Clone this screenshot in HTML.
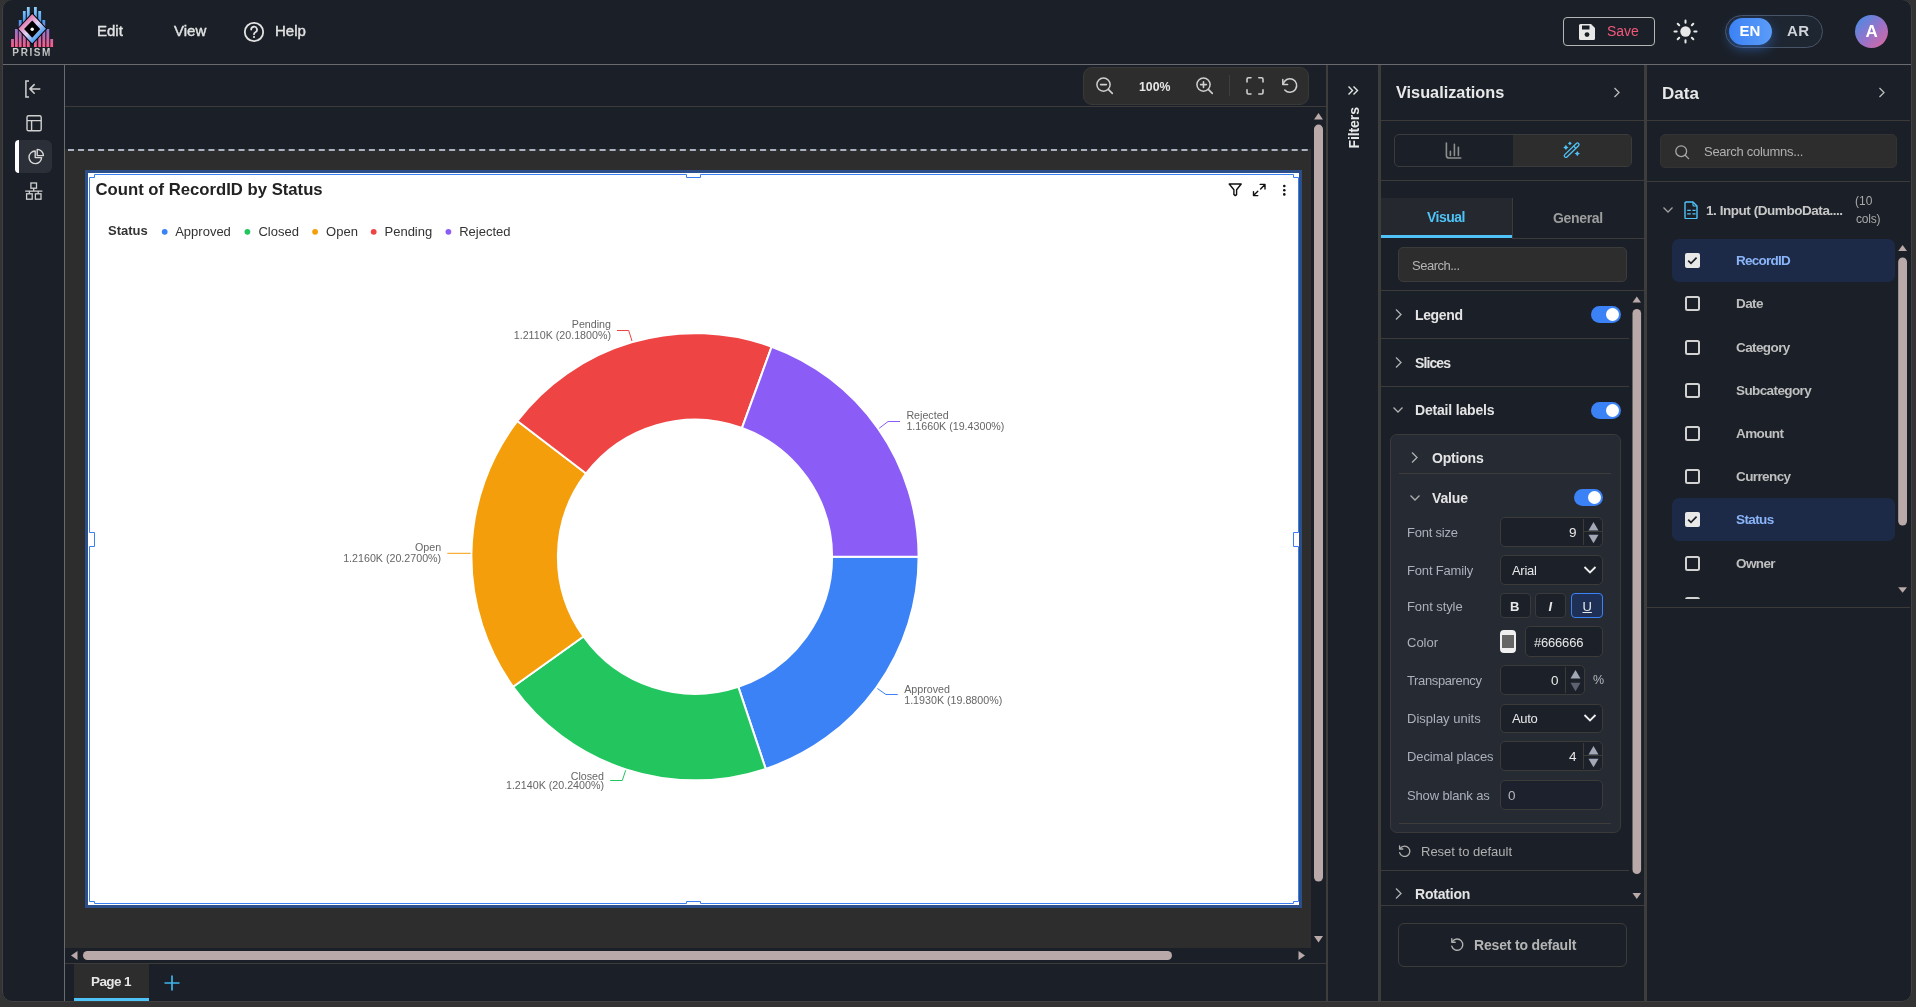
<!DOCTYPE html>
<html><head><meta charset="utf-8">
<style>
*{box-sizing:border-box;margin:0;padding:0}
html,body{width:1916px;height:1007px;overflow:hidden;background:#333333;font-family:"Liberation Sans",sans-serif}
.a{position:absolute}
.nav{background:#1b2028}
.hl{position:absolute;height:1px;background:#3c3b3a}
.vl{position:absolute;width:1px;background:#3c3b3a}
.frame{position:absolute;left:2px;top:-1px;width:1910px;height:1003px;border-radius:10px;box-shadow:0 0 0 40px #333333;border:1px solid #404040;z-index:100;pointer-events:none}
.t{position:absolute;white-space:nowrap;line-height:1}
</style></head>
<body>
<div style="position:absolute;left:0;top:0;width:1916px;height:1007px;will-change:transform;overflow:hidden">
<!-- base app background -->
<div class="a nav" style="left:0;top:0;width:1916px;height:1007px"></div>

<!-- HEADER -->
<div class="hl" style="left:0;top:64px;width:1916px;background:#686a6f"></div>
<!-- logo -->
<svg class="a" style="left:8px;top:4px" width="50" height="56" viewBox="8 4 50 56">
  <defs>
    <linearGradient id="barg" x1="0" y1="7" x2="0" y2="47" gradientUnits="userSpaceOnUse">
      <stop offset="0" stop-color="#8fd0ff"/><stop offset="0.35" stop-color="#4a9cf0"/><stop offset="0.6" stop-color="#a070c8"/><stop offset="1" stop-color="#ff5a86"/>
    </linearGradient>
    <linearGradient id="dg" x1="23" y1="19" x2="41" y2="38" gradientUnits="userSpaceOnUse">
      <stop offset="0" stop-color="#e0609a"/><stop offset="0.5" stop-color="#e4d4f6"/><stop offset="1" stop-color="#2a94f0"/>
    </linearGradient>
    <linearGradient id="pg" x1="0" y1="48" x2="0" y2="56" gradientUnits="userSpaceOnUse">
      <stop offset="0" stop-color="#d8d8d8"/><stop offset="1" stop-color="#aaaaaa"/>
    </linearGradient>
  </defs>
  <g fill="url(#barg)">
    <rect x="11.1" y="39" width="2.8" height="8"/>
    <rect x="15" y="29" width="2.8" height="18"/>
    <rect x="18.8" y="20" width="2.8" height="27"/>
    <rect x="22.9" y="11" width="2.8" height="36"/>
    <rect x="26.9" y="7" width="2.8" height="40"/>
    <rect x="34" y="7" width="2.8" height="40"/>
    <rect x="38.3" y="11" width="2.8" height="36"/>
    <rect x="42.4" y="20" width="2.8" height="27"/>
    <rect x="46.4" y="29" width="2.8" height="18"/>
    <rect x="50.3" y="39" width="2.8" height="8"/>
  </g>
  <polygon points="32.2,12.5 47.2,28.8 32.2,45 17.2,28.8" fill="#000"/>
  <polygon points="32.2,14 46,28.8 32.2,43.6 18.4,28.8" fill="url(#dg)"/>
  <polygon points="32.2,20.4 40.2,29 32.2,37.8 24.1,29" fill="#000"/>
  <circle cx="32.2" cy="29.2" r="1.7" fill="#fff"/>
  <text x="32.2" y="56" text-anchor="middle" font-family="Liberation Sans" font-weight="bold" font-size="10" letter-spacing="1.6" fill="url(#pg)">PRISM</text>
</svg>
<div class="t" style="left:97px;top:23px;font-size:15px;color:#e2e2e2;-webkit-text-stroke:0.4px #e2e2e2">Edit</div>
<div class="t" style="left:174px;top:23px;font-size:15px;color:#e2e2e2;-webkit-text-stroke:0.4px #e2e2e2">View</div>
<svg class="a" style="left:243px;top:21px" width="22" height="22" viewBox="0 0 22 22"><circle cx="11" cy="11" r="9.2" fill="none" stroke="#e2e2e2" stroke-width="1.8"/><path d="M8.2 8.6a2.9 2.9 0 1 1 4.2 2.6c-.9.5-1.4 1-1.4 2.1" fill="none" stroke="#e2e2e2" stroke-width="1.8" stroke-linecap="round"/><circle cx="11" cy="16" r="1.1" fill="#e2e2e2"/></svg>
<div class="t" style="left:275px;top:23px;font-size:15px;color:#e2e2e2;-webkit-text-stroke:0.4px #e2e2e2">Help</div>

<!-- header right -->
<div class="a" style="left:1563px;top:17px;width:92px;height:29px;border:1px solid #b5b5b5;border-radius:4px"></div>
<svg class="a" style="left:1578px;top:23px" width="18" height="17" viewBox="0 0 18 17"><path d="M1 2.5A1.5 1.5 0 0 1 2.5 1H13l4 4v10.5A1.5 1.5 0 0 1 15.5 17h-13A1.5 1.5 0 0 1 1 15.5z" fill="#e8e8e8"/><rect x="4" y="2.5" width="7.5" height="4" fill="#1b2028"/><circle cx="9" cy="11.6" r="2.4" fill="#1b2028"/></svg>
<div class="t" style="left:1607px;top:24px;font-size:14px;color:#f0587a;letter-spacing:0px">Save</div>
<svg class="a" style="left:1673px;top:19px" width="25" height="25" viewBox="0 0 25 25"><circle cx="12.5" cy="12.5" r="5.2" fill="#e8e8e8"/><g stroke="#e8e8e8" stroke-width="2" stroke-linecap="round"><path d="M12.5 1.5v2.2M12.5 21.3v2.2M1.5 12.5h2.2M21.3 12.5h2.2M4.7 4.7l1.5 1.5M18.8 18.8l1.5 1.5M4.7 20.3l1.5-1.5M18.8 6.2l1.5-1.5"/></g></svg>
<div class="a" style="left:1725px;top:15px;width:98px;height:33px;border:1px solid #485468;border-radius:17px;background:#1e2632"></div>
<div class="a" style="left:1729px;top:18px;width:43px;height:27px;border-radius:14px;background:linear-gradient(90deg,#3b82f6,#5b9cf8);box-shadow:0 4px 12px rgba(59,130,246,0.45)"></div>
<div class="t" style="left:1739.5px;top:23px;font-size:15px;font-weight:bold;color:#fff">EN</div>
<div class="t" style="left:1787px;top:23px;font-size:15px;font-weight:bold;color:#d0d3d8;letter-spacing:0.3px">AR</div>
<div class="a" style="left:1855px;top:15px;width:33px;height:33px;border-radius:50%;background:linear-gradient(135deg,#3d8ee8,#9b72c8 55%,#e0679a)"></div>
<div class="t" style="left:1865.5px;top:23px;font-size:17px;font-weight:bold;color:#fff">A</div>

<!-- SIDEBAR -->
<div class="vl" style="left:64px;top:65px;height:940px;background:#686b70"></div>
<svg class="a" style="left:22px;top:78px" width="22" height="22" viewBox="0 0 22 22"><path d="M7 3H3.9v16H7" fill="none" stroke="#d0d0d0" stroke-width="1.5"/><path d="M17.8 10.9H8.4M12.2 6.6L7.9 10.9l4.3 4.3" fill="none" stroke="#d0d0d0" stroke-width="1.5" stroke-linecap="round" stroke-linejoin="round"/></svg>
<svg class="a" style="left:24px;top:113px" width="20" height="20" viewBox="0 0 20 20"><rect x="3" y="2.8" width="14.2" height="15" rx="1.6" fill="none" stroke="#d0d0d0" stroke-width="1.4"/><path d="M3 7.6h14.2M7.6 7.6v10.2" stroke="#d0d0d0" stroke-width="1.4"/></svg>
<div class="a" style="left:15px;top:140px;width:37px;height:33px;border-radius:6px;background:#2b2f38"></div>
<div class="a" style="left:15px;top:140px;width:4px;height:33px;border-radius:4px 0 0 4px;background:#ffffff"></div>
<svg class="a" style="left:26px;top:147px" width="20" height="20" viewBox="0 0 20 20"><path d="M9.2 4A6.3 6.3 0 1 0 15.6 10.6H9.2z" fill="none" stroke="#d8d8d8" stroke-width="1.4" stroke-linejoin="round"/><path d="M11.2 2.4v6.2h6.2a6.2 6.2 0 0 0-6.2-6.2z" fill="none" stroke="#d8d8d8" stroke-width="1.4" stroke-linejoin="round"/></svg>
<svg class="a" style="left:23px;top:180px" width="22" height="22" viewBox="0 0 22 22"><g fill="none" stroke="#d0d0d0" stroke-width="1.3"><rect x="7.9" y="3" width="5.6" height="5.2"/><rect x="3.6" y="13.8" width="5.6" height="5.4"/><rect x="12.4" y="13.8" width="5.6" height="5.4"/><path d="M10.7 8.2v3M2.2 11.2h17.2M6.4 11.2v2.6M15.2 11.2v2.6"/></g></svg>

<!-- CANVAS AREA -->
<div class="hl" style="left:65px;top:106px;width:1262px;background:#3d3b39"></div>
<!-- toolbar pill -->
<div class="a" style="left:1083px;top:67px;width:226px;height:38px;border-radius:9px;background:#2d2d2d;border:1px solid #393939"></div>
<svg class="a" style="left:1094px;top:75px" width="20" height="20" viewBox="0 0 20 20"><circle cx="9.5" cy="9.6" r="6.6" fill="none" stroke="#cfcfcf" stroke-width="1.5"/><path d="M6.6 9.6h5.8M14.3 14.4l4 4" stroke="#cfcfcf" stroke-width="1.6" stroke-linecap="round"/></svg>
<div class="t" style="left:1139px;top:81px;font-size:12.3px;font-weight:bold;color:#e6e6e6">100%</div>
<svg class="a" style="left:1194px;top:75px" width="20" height="20" viewBox="0 0 20 20"><circle cx="9.5" cy="9.6" r="6.6" fill="none" stroke="#cfcfcf" stroke-width="1.5"/><path d="M6.6 9.6h5.8M9.5 6.7v5.8M14.3 14.4l4 4" stroke="#cfcfcf" stroke-width="1.6" stroke-linecap="round"/></svg>
<div class="vl" style="left:1229px;top:75px;height:21px;background:#3f3f3f"></div>
<svg class="a" style="left:1245px;top:76px" width="20" height="20" viewBox="0 0 20 20"><path d="M2 6V3.2Q2 1.8 3.4 1.8H6M13.8 1.8h2.8q1.4 0 1.4 1.4V6M18 13.8v2.8q0 1.4-1.4 1.4h-2.8M6 18H3.4Q2 18 2 16.6v-2.8" fill="none" stroke="#cfcfcf" stroke-width="1.6" stroke-linecap="round"/></svg>
<svg class="a" style="left:1280px;top:76px" width="20" height="20" viewBox="0 0 20 20"><path d="M3.2 8.2A6.8 6.8 0 1 1 4.8 14" fill="none" stroke="#cfcfcf" stroke-width="1.5" stroke-linecap="round"/><path d="M2.8 3.6v4.8h4.8" fill="none" stroke="#cfcfcf" stroke-width="1.5" stroke-linecap="round" stroke-linejoin="round"/></svg>

<!-- gray page -->
<div class="a" style="left:65px;top:149px;width:1246px;height:799px;background:#2d2d2d"></div>
<svg class="a" style="left:68px;top:149px" width="1240" height="2" viewBox="0 0 1240 2"><line x1="0" y1="1" x2="1240" y2="1" stroke="#aab2c1" stroke-width="2" stroke-dasharray="6.03 4"/></svg>

<!-- vertical scrollbar -->
<svg class="a" style="left:1311px;top:107px" width="15" height="841" viewBox="0 0 15 841">
  <path d="M3 12.5L7.5 6 12 12.5z" fill="#b9a9a9"/>
  <rect x="3" y="17.6" width="9" height="757" rx="4.5" fill="#b9a9a9"/>
  <path d="M3 829L7.5 835.5 12 829z" fill="#b9a9a9"/>
</svg>
<!-- horizontal scrollbar -->
<svg class="a" style="left:65px;top:948px" width="1246" height="15" viewBox="0 0 1246 15">
  <path d="M12.5 3L6 7.5 12.5 12z" fill="#b9a9a9"/>
  <rect x="18" y="3" width="1089" height="9" rx="4.5" fill="#b9a9a9"/>
  <path d="M1233.5 3L1240 7.5 1233.5 12z" fill="#b9a9a9"/>
</svg>
<div class="hl" style="left:65px;top:963px;width:1262px;background:#3d3b39"></div>
<!-- page tabs -->
<div class="a" style="left:74px;top:964px;width:75px;height:37px;background:#2d2d2d"></div>
<div class="a" style="left:74px;top:998px;width:75px;height:3px;background:#4fc3f7"></div>
<div class="t" style="left:91px;top:975px;font-size:13.5px;font-weight:bold;color:#e6e6e6;letter-spacing:-0.6px">Page 1</div>
<svg class="a" style="left:163px;top:974px" width="18" height="18" viewBox="0 0 18 18"><path d="M9 1.5v15M1.5 9h15" stroke="#3fb6ea" stroke-width="1.7"/></svg>

<!-- canvas right border and filters strip -->
<div class="a" style="left:1326px;top:65px;width:2px;height:940px;background:#3d3d3c"></div>
<div class="a" style="left:1378px;top:65px;width:3px;height:940px;background:#3d3d3c"></div>
<svg class="a" style="left:1346px;top:84px" width="14" height="13" viewBox="0 0 14 13"><path d="M2.5 2.5L6.5 6.5 2.5 10.5M7.5 2.5L11.5 6.5 7.5 10.5" fill="none" stroke="#e6e6e6" stroke-width="1.4"/></svg>
<div class="t" style="left:1333px;top:121px;width:41px;font-size:14px;font-weight:bold;color:#e8e8e8;transform:rotate(-90deg);transform-origin:center;text-align:center;letter-spacing:-0.1px">Filters</div>

<!-- CHART BOX -->
<div class="a" style="left:85px;top:170px;width:1217px;height:738px;border:3px solid #2c4f8a;background:#fff"></div>
<svg class="a" style="left:0;top:0" width="1916" height="1007" viewBox="0 0 1916 1007">
  <path d="M94.5 174.5H686.5V177.5H700.5V174.5H1293.5V177.5H1298.5V532.5H1293.5V546.5H1298.5V901.5H1293.5V903.5H700.5V901.5H686.5V903.5H94.5V901.5H89.5V546.5H94.5V532.5H89.5V177.5H94.5Z" fill="none" stroke="#3a80f2" stroke-width="1"/>
<path d="M918.60 556.75A223.6 223.6 0 0 1 765.70 768.88L738.35 686.82A137.1 137.1 0 0 0 832.10 556.75Z" fill="#3b82f6" stroke="#fff" stroke-width="2" stroke-linejoin="round"/>
<path d="M765.70 768.88A223.6 223.6 0 0 1 513.12 686.81L583.48 636.50A137.1 137.1 0 0 0 738.35 686.82Z" fill="#22c55e" stroke="#fff" stroke-width="2" stroke-linejoin="round"/>
<path d="M513.12 686.81A223.6 223.6 0 0 1 517.38 420.93L586.09 473.47A137.1 137.1 0 0 0 583.48 636.50Z" fill="#f59e0b" stroke="#fff" stroke-width="2" stroke-linejoin="round"/>
<path d="M517.38 420.93A223.6 223.6 0 0 1 771.67 346.70L742.01 427.96A137.1 137.1 0 0 0 586.09 473.47Z" fill="#ef4444" stroke="#fff" stroke-width="2" stroke-linejoin="round"/>
<path d="M771.67 346.70A223.6 223.6 0 0 1 918.60 556.75L832.10 556.75A137.1 137.1 0 0 0 742.01 427.96Z" fill="#8b5cf6" stroke="#fff" stroke-width="2" stroke-linejoin="round"/>

  <g fill="none" stroke-width="1">
    <path d="M617 330.5H628.7L632 341" stroke="#ef4444"/>
    <path d="M879.2 428.3L888.1 421.5H900" stroke="#8b5cf6"/>
    <path d="M447.3 553.3H470.7" stroke="#f59e0b"/>
    <path d="M877.4 688.5L885.9 694.5H897.7" stroke="#3b82f6"/>
    <path d="M610.2 780.5H622.3L625.7 770.2" stroke="#22c55e"/>
  </g>
  <g font-family="Liberation Sans" font-size="10.7" fill="#666666">
    <text x="611" y="328" text-anchor="end">Pending</text>
    <text x="611" y="339.2" text-anchor="end">1.2110K (20.1800%)</text>
    <text x="906.4" y="419.1">Rejected</text>
    <text x="906.4" y="430.2">1.1660K (19.4300%)</text>
    <text x="441.2" y="550.9" text-anchor="end">Open</text>
    <text x="441.2" y="562.2" text-anchor="end">1.2160K (20.2700%)</text>
    <text x="904.2" y="693">Approved</text>
    <text x="904.2" y="704.3">1.1930K (19.8800%)</text>
    <text x="604" y="779.5" text-anchor="end">Closed</text>
    <text x="604" y="789.4" text-anchor="end">1.2140K (20.2400%)</text>
  </g>
  <text x="95.5" y="195" font-family="Liberation Sans" font-weight="bold" font-size="16.7" fill="#222">Count of RecordID by Status</text>
  <g font-family="Liberation Sans" font-size="13" fill="#333">
    <text x="108" y="235" font-weight="bold">Status</text>
    <circle cx="164.7" cy="231.8" r="2.9" fill="#3b82f6"/><text x="175.2" y="235.5">Approved</text>
    <circle cx="247.4" cy="231.8" r="2.9" fill="#22c55e"/><text x="258.4" y="235.5">Closed</text>
    <circle cx="315.1" cy="231.8" r="2.9" fill="#f59e0b"/><text x="326.1" y="235.5">Open</text>
    <circle cx="373.7" cy="231.8" r="2.9" fill="#ef4444"/><text x="384.5" y="235.5">Pending</text>
    <circle cx="448.4" cy="231.8" r="2.9" fill="#8b5cf6"/><text x="459.2" y="235.5">Rejected</text>
  </g>
  <!-- chart icons -->
  <g fill="none" stroke="#111" stroke-width="1.4" stroke-linejoin="round" stroke-linecap="round">
    <path d="M1229.2 184H1241.2L1236.6 189.8V194.6L1235.3 195.6L1233.9 194.4V189.8Z"/>
    <path d="M1260.2 184.4H1265V189M1265 184.4L1260.6 189M1253.5 191.6V195.6H1257.8M1253.5 195.6L1257.8 191.2"/>
  </g>
  <g fill="#111"><circle cx="1284.3" cy="186" r="1.3"/><circle cx="1284.3" cy="190.2" r="1.3"/><circle cx="1284.3" cy="194.4" r="1.3"/></g>
</svg>


<!-- VISUALIZATIONS PANEL -->
<div class="t" style="left:1396px;top:84px;font-size:16.3px;font-weight:bold;color:#e8e8e8">Visualizations</div>
<svg class="a" style="left:1610px;top:85px" width="14" height="14" viewBox="0 0 14 14"><path d="M4.5 3L9 7.5 4.5 12" fill="none" stroke="#bdbdbd" stroke-width="1.3"/></svg>
<div class="hl" style="left:1381px;top:120px;width:263px"></div>
<div class="a" style="left:1394px;top:134px;width:238px;height:33px;border:1px solid #3b3b3b;border-radius:5px;overflow:hidden">
  <div class="a" style="left:118px;top:0;width:120px;height:33px;background:#2d2d2d"></div>
</div>
<svg class="a" style="left:1443px;top:140px" width="20" height="20" viewBox="0 0 20 20"><path d="M3.4 3V15.4Q3.4 18 6 18H17.8" fill="none" stroke="#8e8e8e" stroke-width="1.6" stroke-linecap="round"/><path d="M7.4 11.4v4M11.4 4.4v11M15.4 7.4v8" stroke="#8e8e8e" stroke-width="1.6" stroke-linecap="round"/></svg>
<svg class="a" style="left:1561px;top:140px" width="20" height="20" viewBox="0 0 20 20"><g transform="rotate(-44 10.65 10.2)"><rect x="1" y="8.6" width="19.3" height="3.2" rx="1.6" fill="none" stroke="#4fc3f7" stroke-width="1.3"/><path d="M15 8.6v3.2" stroke="#4fc3f7" stroke-width="1.3"/></g><path d="M4.9 4.7Q5.66 6.64 7.6000000000000005 7.4Q5.66 8.16 4.9 10.100000000000001Q4.14 8.16 2.2 7.4Q4.14 6.64 4.9 4.7Z M16.3 10.899999999999999Q17.06 12.84 19.0 13.6Q17.06 14.36 16.3 16.3Q15.54 14.36 13.600000000000001 13.6Q15.54 12.84 16.3 10.899999999999999Z M8.9 1.5Q9.66 2.64 10.8 3.4Q9.66 4.16 8.9 5.3Q8.14 4.16 7.0 3.4Q8.14 2.64 8.9 1.5Z" fill="#4fc3f7"/></svg>
<div class="hl" style="left:1381px;top:180px;width:263px"></div>
<div class="a" style="left:1381px;top:198px;width:131px;height:38px;background:#25282e"></div>
<div class="a" style="left:1381px;top:235px;width:131px;height:3px;background:#4fc3f7"></div>
<div class="vl" style="left:1512px;top:198px;height:40px;background:#3a3b3d"></div>
<div class="hl" style="left:1512px;top:238px;width:132px"></div>
<div class="t" style="left:1427px;top:210px;font-size:14px;font-weight:bold;color:#4fc3f7;letter-spacing:-0.5px">Visual</div>
<div class="t" style="left:1553px;top:211px;font-size:14px;font-weight:bold;color:#9e9e9e;letter-spacing:-0.32px">General</div>
<div class="a" style="left:1398px;top:247px;width:229px;height:35px;border:1px solid #3b3b3b;border-radius:5px;background:#2d2d2d"></div>
<div class="t" style="left:1412px;top:259px;font-size:13px;color:#b4b4b4;letter-spacing:-0.5px">Search...</div>
<div class="hl" style="left:1381px;top:290px;width:263px"></div>

<!-- scroll viewport content -->
<svg class="a" style="left:1394px;top:308px" width="10" height="14" viewBox="0 0 10 14"><path d="M2 1.5L7 6.5 2 11.5" fill="none" stroke="#b0b0b0" stroke-width="1.3"/></svg>
<div class="t" style="left:1415px;top:308px;font-size:14px;font-weight:bold;color:#e4e4e4;letter-spacing:-0.36px">Legend</div>
<div class="a" style="left:1591px;top:306px;width:30px;height:17px;border-radius:9px;background:#3b82f6"></div>
<div class="a" style="left:1606px;top:308px;width:13px;height:13px;border-radius:50%;background:#fff"></div>
<div class="hl" style="left:1381px;top:338px;width:248px"></div>
<svg class="a" style="left:1394px;top:356px" width="10" height="14" viewBox="0 0 10 14"><path d="M2 1.5L7 6.5 2 11.5" fill="none" stroke="#b0b0b0" stroke-width="1.3"/></svg>
<div class="t" style="left:1415px;top:356px;font-size:14px;font-weight:bold;color:#e4e4e4;letter-spacing:-0.9px">Slices</div>
<div class="hl" style="left:1381px;top:386px;width:248px"></div>
<svg class="a" style="left:1392px;top:404px" width="12" height="12" viewBox="0 0 12 12"><path d="M1.5 3.5L6 8 10.5 3.5" fill="none" stroke="#b0b0b0" stroke-width="1.3"/></svg>
<div class="t" style="left:1415px;top:403px;font-size:14px;font-weight:bold;color:#e4e4e4;letter-spacing:-0.18px">Detail labels</div>
<div class="a" style="left:1591px;top:402px;width:30px;height:17px;border-radius:9px;background:#3b82f6"></div>
<div class="a" style="left:1606px;top:404px;width:13px;height:13px;border-radius:50%;background:#fff"></div>

<!-- card -->
<div class="a" style="left:1390px;top:434px;width:231px;height:399px;border:1px solid #3a3a3a;border-radius:7px;background:#252a33"></div>
<svg class="a" style="left:1410px;top:451px" width="10" height="14" viewBox="0 0 10 14"><path d="M2 1.5L7 6.5 2 11.5" fill="none" stroke="#b0b0b0" stroke-width="1.3"/></svg>
<div class="t" style="left:1432px;top:451px;font-size:14px;font-weight:bold;color:#e4e4e4;letter-spacing:-0.2px">Options</div>
<div class="hl" style="left:1399px;top:473px;width:212px;background:#3d3c3a"></div>
<svg class="a" style="left:1409px;top:492px" width="12" height="12" viewBox="0 0 12 12"><path d="M1.5 3.5L6 8 10.5 3.5" fill="none" stroke="#b0b0b0" stroke-width="1.3"/></svg>
<div class="t" style="left:1432px;top:491px;font-size:14px;font-weight:bold;color:#e4e4e4;letter-spacing:-0.16px">Value</div>
<div class="a" style="left:1574px;top:489px;width:29px;height:17px;border-radius:9px;background:#3b82f6"></div>
<div class="a" style="left:1588px;top:491px;width:13px;height:13px;border-radius:50%;background:#fff"></div>

<div class="t" style="left:1407px;top:526px;font-size:13px;color:#abb1bb;letter-spacing:-0.21px">Font size</div>
<div class="a" style="left:1500px;top:517px;width:103px;height:30px;border:1px solid #3d3b38;border-radius:5px;background:#1b2029"></div>
<div class="vl" style="left:1583px;top:519px;height:26px;background:#3d3b38"></div>
<div class="hl" style="left:1583px;top:531px;width:19px;background:#3d3b38"></div>
<svg class="a" style="left:1586px;top:520px" width="14" height="24" viewBox="0 0 14 24"><path d="M2.5 10.4L7.5 2 12.5 10.4z" fill="#a2a8b6"/><path d="M2.5 14.8L7.5 23.2 12.5 14.8z" fill="#a2a8b6"/></svg>
<div class="t" style="left:1569px;top:526px;font-size:13.5px;color:#e8e8e8">9</div>

<div class="t" style="left:1407px;top:564px;font-size:13px;color:#abb1bb;letter-spacing:-0.17px">Font Family</div>
<div class="a" style="left:1500px;top:555px;width:103px;height:30px;border:1px solid #3d3b38;border-radius:5px;background:#1b2029"></div>
<div class="t" style="left:1512px;top:564px;font-size:13px;color:#e8e8e8;letter-spacing:-0.3px">Arial</div>
<svg class="a" style="left:1583px;top:564px" width="14" height="12" viewBox="0 0 14 12"><path d="M1.5 3L7 8.5 12.5 3" fill="none" stroke="#f0f0f0" stroke-width="1.8"/></svg>

<div class="t" style="left:1407px;top:600px;font-size:13px;color:#abb1bb;letter-spacing:-0.08px">Font style</div>
<div class="a" style="left:1500px;top:593px;width:31px;height:25px;border:1px solid #3a3a3a;border-radius:4px;background:#1b2029"></div>
<div class="t" style="left:1510px;top:599.5px;font-size:13px;font-weight:bold;color:#e8e8e8">B</div>
<div class="a" style="left:1535px;top:593px;width:31px;height:25px;border:1px solid #3a3a3a;border-radius:4px;background:#1b2029"></div>
<div class="t" style="left:1548.5px;top:599.5px;font-size:13px;font-style:italic;font-weight:bold;color:#e8e8e8">I</div>
<div class="a" style="left:1571px;top:593px;width:32px;height:25px;border:1px solid #3b82f6;border-radius:4px;background:#1f3057"></div>
<div class="t" style="left:1582.5px;top:599.5px;font-size:13px;color:#e8e8e8;text-decoration:underline">U</div>

<div class="t" style="left:1407px;top:636px;font-size:13px;color:#abb1bb;letter-spacing:0px">Color</div>
<div class="a" style="left:1500px;top:630px;width:16px;height:23px;border-style:solid;border-color:#f0f0f0;border-width:5px 2px;border-radius:4px;background:#666666"></div>
<div class="a" style="left:1525px;top:626px;width:78px;height:31px;border:1px solid #3d3b38;border-radius:5px;background:#1b2029"></div>
<div class="t" style="left:1534px;top:636px;font-size:13px;color:#e8e8e8;letter-spacing:-0.2px">#666666</div>

<div class="t" style="left:1407px;top:674px;font-size:13px;color:#abb1bb;letter-spacing:-0.37px">Transparency</div>
<div class="a" style="left:1500px;top:665px;width:85px;height:30px;border:1px solid #3d3b38;border-radius:5px;background:#1b2029"></div>
<div class="vl" style="left:1565px;top:667px;height:26px;background:#3d3b38"></div>
<svg class="a" style="left:1568px;top:668px" width="14" height="24" viewBox="0 0 14 24"><path d="M2.5 10.4L7.5 2 12.5 10.4z" fill="#a2a8b6"/><path d="M2.5 14.8L7.5 23.2 12.5 14.8z" fill="#5c6270"/></svg>
<div class="t" style="left:1551px;top:674px;font-size:13.5px;color:#e8e8e8">0</div>
<div class="t" style="left:1593px;top:674px;font-size:12.5px;color:#b6bac2">%</div>

<div class="t" style="left:1407px;top:712px;font-size:13px;color:#abb1bb;letter-spacing:0px">Display units</div>
<div class="a" style="left:1500px;top:704px;width:103px;height:29px;border:1px solid #3d3b38;border-radius:5px;background:#1b2029"></div>
<div class="t" style="left:1512px;top:712px;font-size:13px;color:#e8e8e8;letter-spacing:-0.3px">Auto</div>
<svg class="a" style="left:1583px;top:712px" width="14" height="12" viewBox="0 0 14 12"><path d="M1.5 3L7 8.5 12.5 3" fill="none" stroke="#f0f0f0" stroke-width="1.8"/></svg>

<div class="t" style="left:1407px;top:750px;font-size:13px;color:#abb1bb;letter-spacing:-0.12px">Decimal places</div>
<div class="a" style="left:1500px;top:741px;width:103px;height:30px;border:1px solid #3d3b38;border-radius:5px;background:#1b2029"></div>
<div class="vl" style="left:1583px;top:743px;height:26px;background:#3d3b38"></div>
<div class="hl" style="left:1583px;top:755px;width:19px;background:#3d3b38"></div>
<svg class="a" style="left:1586px;top:744px" width="14" height="24" viewBox="0 0 14 24"><path d="M2.5 10.4L7.5 2 12.5 10.4z" fill="#a2a8b6"/><path d="M2.5 14.8L7.5 23.2 12.5 14.8z" fill="#a2a8b6"/></svg>
<div class="t" style="left:1569px;top:750px;font-size:13.5px;color:#e8e8e8">4</div>

<div class="t" style="left:1407px;top:789px;font-size:13px;color:#abb1bb;letter-spacing:-0.15px">Show blank as</div>
<div class="a" style="left:1500px;top:780px;width:103px;height:30px;border:1px solid #3d3b38;border-radius:5px;background:#1c212d"></div>
<div class="t" style="left:1508px;top:789px;font-size:13.5px;color:#b8b8b8">0</div>

<div class="hl" style="left:1399px;top:823px;width:212px;background:#3d3c3a"></div>
<svg class="a" style="left:1397px;top:844px" width="15" height="15" viewBox="0 0 15 15"><path d="M3.4 4.2A5.2 5.2 0 1 1 2.6 8.6" fill="none" stroke="#b0b0b0" stroke-width="1.3" stroke-linecap="round"/><path d="M2.6 1.8v3.2h3.2" fill="none" stroke="#b0b0b0" stroke-width="1.3" stroke-linecap="round" stroke-linejoin="round"/></svg>
<div class="t" style="left:1421px;top:845px;font-size:13px;color:#b0b0b0;letter-spacing:0px">Reset to default</div>
<div class="hl" style="left:1381px;top:870px;width:248px"></div>
<svg class="a" style="left:1394px;top:887px" width="10" height="14" viewBox="0 0 10 14"><path d="M2 1.5L7 6.5 2 11.5" fill="none" stroke="#b0b0b0" stroke-width="1.3"/></svg>
<div class="t" style="left:1415px;top:887px;font-size:14px;font-weight:bold;color:#e4e4e4;letter-spacing:-0.2px">Rotation</div>

<!-- vis scrollbar -->
<svg class="a" style="left:1631px;top:291px" width="12" height="614" viewBox="0 0 12 614">
  <path d="M1.5 11.6L5.8 5.6 10 11.6z" fill="#b9a9a9"/>
  <rect x="1.5" y="18" width="8.6" height="565" rx="4.3" fill="#b9a9a9"/>
  <path d="M1.5 602L5.8 608 10 602z" fill="#b9a9a9"/>
</svg>
<div class="hl" style="left:1381px;top:905px;width:263px"></div>
<div class="a" style="left:1398px;top:923px;width:229px;height:44px;border:1px solid #3d3b38;border-radius:6px"></div>
<svg class="a" style="left:1449px;top:937px" width="16" height="16" viewBox="0 0 16 16"><path d="M3.6 4.4A5.6 5.6 0 1 1 2.8 9.2" fill="none" stroke="#b0b0b0" stroke-width="1.4" stroke-linecap="round"/><path d="M2.8 1.8v3.4h3.4" fill="none" stroke="#b0b0b0" stroke-width="1.4" stroke-linecap="round" stroke-linejoin="round"/></svg>
<div class="t" style="left:1474px;top:938px;font-size:14px;font-weight:bold;color:#b4b4b4;letter-spacing:-0.18px">Reset to default</div>
<div class="a" style="left:1644px;top:65px;width:3px;height:940px;background:#3d3d3c"></div>


<!-- DATA PANEL -->
<div class="t" style="left:1662px;top:85px;font-size:17px;font-weight:bold;color:#e8e8e8">Data</div>
<svg class="a" style="left:1875px;top:85px" width="14" height="14" viewBox="0 0 14 14"><path d="M4.5 3L9 7.5 4.5 12" fill="none" stroke="#bdbdbd" stroke-width="1.3"/></svg>
<div class="hl" style="left:1647px;top:120px;width:263px"></div>
<div class="a" style="left:1660px;top:134px;width:237px;height:34px;border:1px solid #333;border-radius:5px;background:#2d2d2d"></div>
<svg class="a" style="left:1674px;top:144px" width="16" height="16" viewBox="0 0 16 16"><circle cx="7.2" cy="7.2" r="5.4" fill="none" stroke="#a8a8a8" stroke-width="1.3"/><path d="M11.2 11.2l3.4 3.4" stroke="#a8a8a8" stroke-width="1.3" stroke-linecap="round"/></svg>
<div class="t" style="left:1704px;top:145px;font-size:13px;color:#b0b0b0;letter-spacing:-0.29px">Search columns...</div>
<div class="hl" style="left:1647px;top:181px;width:263px"></div>
<svg class="a" style="left:1662px;top:204px" width="12" height="12" viewBox="0 0 12 12"><path d="M1.5 3.5L6 8 10.5 3.5" fill="none" stroke="#a0a0a0" stroke-width="1.3"/></svg>
<svg class="a" style="left:1683px;top:201px" width="16" height="18" viewBox="0 0 16 18"><path d="M3.2 1H10l4 4v11.4q0 1.2-1.2 1.2H3.2Q2 17.6 2 16.4V2.2Q2 1 3.2 1z" fill="none" stroke="#4fc3f7" stroke-width="1.4" stroke-linejoin="round"/><path d="M10 1v3q0 1 1 1h3" fill="none" stroke="#4fc3f7" stroke-width="1.2"/><path d="M4.2 9.4h3.6M9.4 9.4h3.2M4.2 12.8h3.6M9.4 12.8h3.2" stroke="#4fc3f7" stroke-width="1.2"/></svg>
<div class="t" style="left:1706px;top:204px;font-size:13.5px;font-weight:bold;color:#c8c8c8;letter-spacing:-0.45px">1. Input (DumboData....</div>
<div class="t" style="left:1855px;top:195px;font-size:12px;color:#a8a8a8">(10</div>
<div class="t" style="left:1856px;top:213px;font-size:12px;color:#a8a8a8;letter-spacing:-0.2px">cols)</div>

<div class="a" style="left:1647px;top:182px;width:263px;height:417px;overflow:hidden">
  <div class="a" style="left:25px;top:57px;width:223px;height:43px;border-radius:7px;background:#1c2a48"></div>
  <div class="a" style="left:25px;top:316px;width:223px;height:43px;border-radius:7px;background:#1c2a48"></div>
  <div class="a" style="left:38px;top:71.0px;width:15px;height:15px;border-radius:2px;background:#e8e8e8"></div>
  <svg class="a" style="left:38px;top:71.0px" width="15" height="15" viewBox="0 0 15 15"><path d="M3.2 7.6l2.8 2.8 5.6-5.8" fill="none" stroke="#1b2028" stroke-width="1.7"/></svg>
  <div class="t" style="left:89px;top:72.3px;font-size:13.5px;font-weight:bold;color:#8ab4f8;letter-spacing:-0.75px">RecordID</div>
  <div class="a" style="left:38px;top:114.0px;width:15px;height:15px;border-radius:2.5px;border:2px solid #d2d2d2"></div>
  <div class="t" style="left:89px;top:115.3px;font-size:13.5px;font-weight:bold;color:#bfbfbf;letter-spacing:-0.6px">Date</div>
  <div class="a" style="left:38px;top:157.5px;width:15px;height:15px;border-radius:2.5px;border:2px solid #d2d2d2"></div>
  <div class="t" style="left:89px;top:158.8px;font-size:13.5px;font-weight:bold;color:#bfbfbf;letter-spacing:-0.6px">Category</div>
  <div class="a" style="left:38px;top:201.0px;width:15px;height:15px;border-radius:2.5px;border:2px solid #d2d2d2"></div>
  <div class="t" style="left:89px;top:202.3px;font-size:13.5px;font-weight:bold;color:#bfbfbf;letter-spacing:-0.6px">Subcategory</div>
  <div class="a" style="left:38px;top:243.5px;width:15px;height:15px;border-radius:2.5px;border:2px solid #d2d2d2"></div>
  <div class="t" style="left:89px;top:244.8px;font-size:13.5px;font-weight:bold;color:#bfbfbf;letter-spacing:-0.6px">Amount</div>
  <div class="a" style="left:38px;top:287.0px;width:15px;height:15px;border-radius:2.5px;border:2px solid #d2d2d2"></div>
  <div class="t" style="left:89px;top:288.3px;font-size:13.5px;font-weight:bold;color:#bfbfbf;letter-spacing:-0.6px">Currency</div>
  <div class="a" style="left:38px;top:330.0px;width:15px;height:15px;border-radius:2px;background:#e8e8e8"></div>
  <svg class="a" style="left:38px;top:330.0px" width="15" height="15" viewBox="0 0 15 15"><path d="M3.2 7.6l2.8 2.8 5.6-5.8" fill="none" stroke="#1b2028" stroke-width="1.7"/></svg>
  <div class="t" style="left:89px;top:331.3px;font-size:13.5px;font-weight:bold;color:#8ab4f8;letter-spacing:-0.6px">Status</div>
  <div class="a" style="left:38px;top:373.5px;width:15px;height:15px;border-radius:2.5px;border:2px solid #d2d2d2"></div>
  <div class="t" style="left:89px;top:374.8px;font-size:13.5px;font-weight:bold;color:#bfbfbf;letter-spacing:-0.6px">Owner</div>
  <div class="a" style="left:38px;top:415.3px;width:15px;height:15px;border-radius:2.5px;border:2px solid #d2d2d2"></div>
  <div class="t" style="left:89px;top:416.8px;font-size:13.5px;font-weight:bold;color:#bfbfbf;letter-spacing:-0.6px">Region</div>
</div>
<svg class="a" style="left:1897px;top:240px" width="12" height="358" viewBox="0 0 12 358">
  <path d="M1.2 11L5.6 5 10 11z" fill="#b9a9a9"/>
  <rect x="1.2" y="17.5" width="8.8" height="268" rx="4.4" fill="#b9a9a9"/>
  <path d="M1.2 347.3L5.6 352.8 10 347.3z" fill="#b9a9a9"/>
</svg>
<div class="hl" style="left:1647px;top:607px;width:263px"></div>


<div class="frame"></div>
</div>
</body></html>
